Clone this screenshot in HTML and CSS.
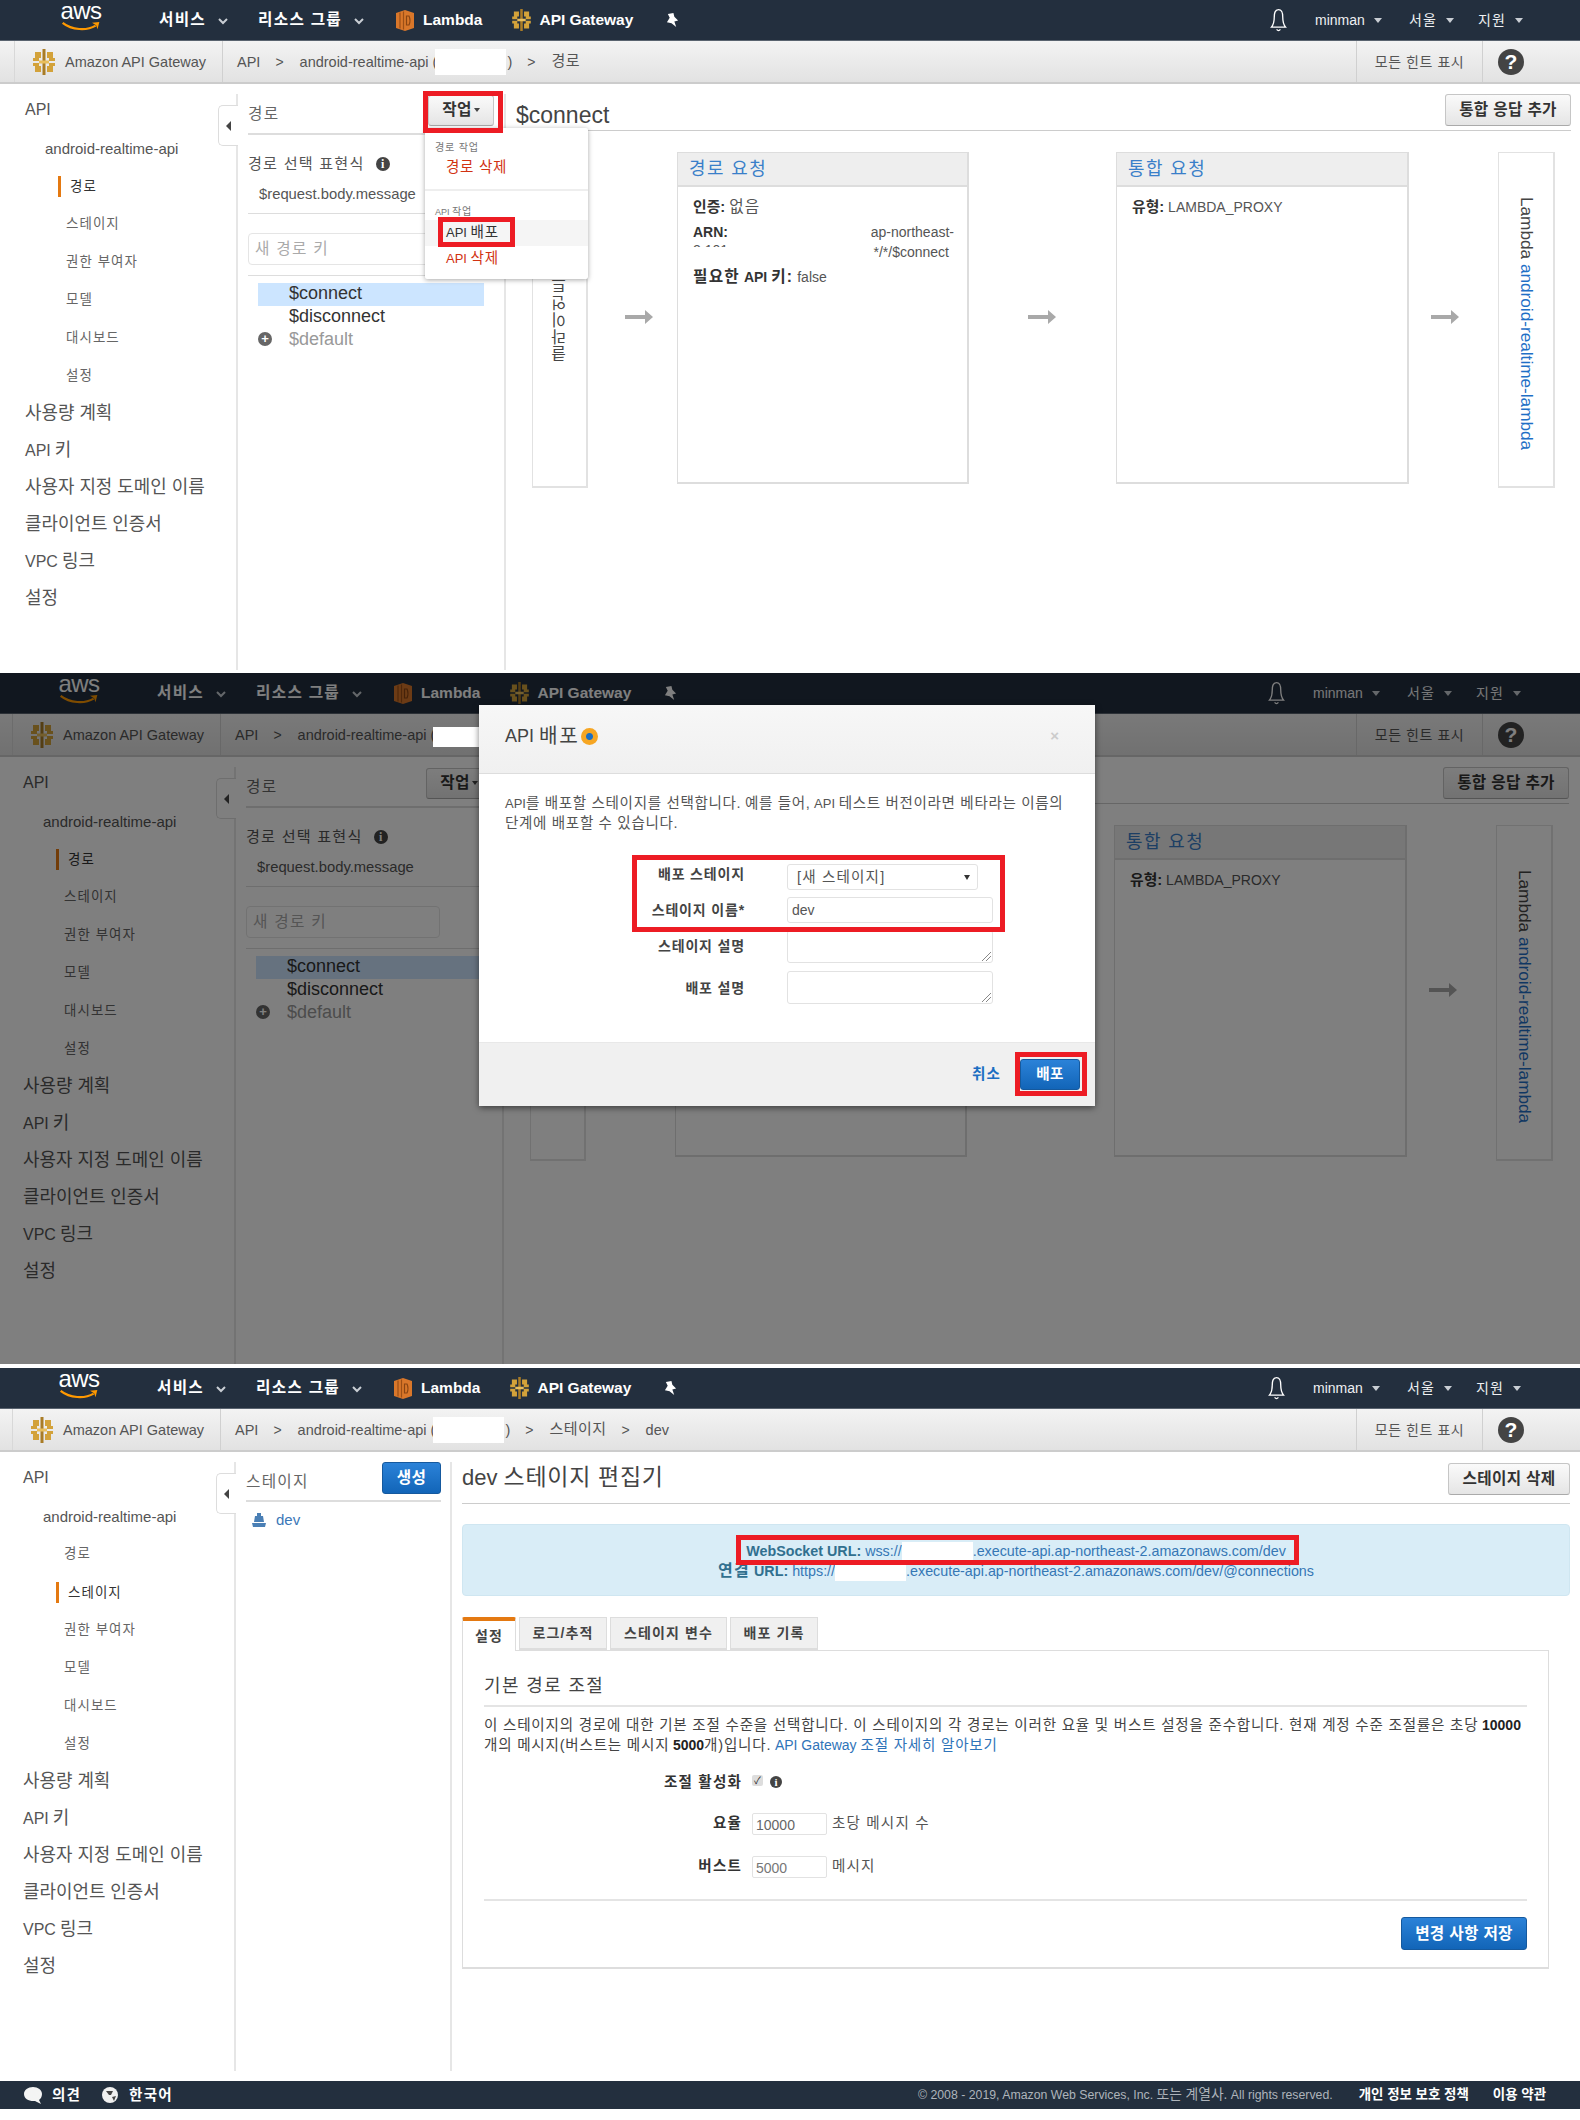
FILE: index.html
```html
<!DOCTYPE html>
<html lang="ko">
<head>
    <meta charset="utf-8">
    <title>API Gateway</title>
    <link rel="stylesheet" href="styles.css">
</head>
<body>
    <!-- shared icons -->
    <svg class="svg-defs" aria-hidden="true">
        <symbol id="i-smile" viewBox="0 0 42 12">
            <path d="M1 2 C11 10 27 11 37 5" fill="none" stroke="#f90" stroke-width="2.4"/>
            <path d="M33 2 L41 1 L39 9 L37.500 4.500 Z" fill="#f90"/>
        </symbol>
        <symbol id="i-gateway" viewBox="0 0 22 26">
            <rect x="9.500" y="0" width="3" height="26" fill="#a97c26"/>
            <path d="M8 3 H2 V9 H0 V12 H6 V9 H8 Z M14 3 H20 V9 H22 V12 H16 V9 H14 Z M0 14 H6 V17 H8 V23 H2 V17 H0 Z M22 14 H16 V17 H14 V23 H20 V17 H22 Z" fill="#d3a23a"/>
            <rect x="6" y="11.500" width="10" height="3" fill="#e8be5c"/>
        </symbol>
        <symbol id="i-lambda" viewBox="0 0 18 21">
            <polygon points="9,0 18,3 18,18 9,21 0,18 0,3" fill="#d9772a"/>
            <path d="M4 2.500 V18.500 M7.500 1.500 V19.500" stroke="#9c4f16" stroke-width="1.200"/>
            <path d="M10.500 6 H13 Q15 10.500 13 15 H10.500 Z" fill="none" stroke="#8a4512" stroke-width="1.200"/>
        </symbol>
        <symbol id="i-pin" viewBox="0 0 14 16">
            <path d="M2 1 L8 0 L9 4 L13 8 L9 9 L11 15 L6 11 L1 10 L4 5 Z" fill="#fff"/>
        </symbol>
        <symbol id="i-bell" viewBox="0 0 18 26">
            <path d="M9 2 C5 2 4.500 6 4.500 10 C4.500 15 3.500 18 1.500 20.500 H16.500 C14.500 18 13.500 15 13.500 10 C13.500 6 13 2 9 2 Z M7 23 Q9 25.500 11 23" fill="none" stroke="#fff" stroke-width="1.400"/>
        </symbol>
        <symbol id="i-arrow" viewBox="0 0 28 14">
            <path d="M0 5 H20 V0 L28 7 L20 14 V9 H0 Z" fill="#a9a9a9"/>
        </symbol>
        <symbol id="i-chev" viewBox="0 0 10 7">
            <path d="M1 1 L5 5 L9 1" fill="none" stroke="#c9ced4" stroke-width="2"/>
        </symbol>
        <symbol id="i-stage" viewBox="0 0 16 16">
            <path d="M6 1 H10 V4 H12 L13 10 H3 L4 4 H6 Z M1 11 H15 L14 15 H2 Z" fill="#4a7fb5"/>
        </symbol>
    </svg>

    <!-- 1: route actions -->
    <section class="shot shot-one">
        <header class="nav">
            <div class="aws"><span class="aws-word">aws</span><svg class="aws-smile"><use href="#i-smile"/></svg></div>
            <span class="nav-link nav-services"><span class="k">서비스</span></span><svg class="chev"><use href="#i-chev"/></svg>
            <span class="nav-link nav-groups"><span class="k">리소스 그룹</span></span><svg class="chev"><use href="#i-chev"/></svg>
            <svg class="svc-lambda"><use href="#i-lambda"/></svg><span class="nav-link nav-strong">Lambda</span>
            <svg class="svc-gateway"><use href="#i-gateway"/></svg><span class="nav-link nav-strong">API Gateway</span>
            <svg class="nav-pin"><use href="#i-pin"/></svg>
            <svg class="nav-bell"><use href="#i-bell"/></svg>
            <span class="nav-small nav-user">minman<i class="tri"></i></span>
            <span class="nav-small nav-region"><span class="k">서울</span><i class="tri"></i></span>
            <span class="nav-small nav-help"><span class="k">지원</span><i class="tri"></i></span>
        </header>
        <div class="subnav">
            <div class="sub-brand"><svg class="brand-icon"><use href="#i-gateway"/></svg>Amazon API Gateway</div>
            <div class="crumbs">
                <span>API</span><span class="sep">&gt;</span><span>android-realtime-api (</span><span class="hide-id"></span><span>)</span><span class="sep">&gt;</span><span class="k">경로</span>
            </div>
            <div class="hints"><span class="k">모든 힌트 표시</span></div>
            <div class="help"><span class="help-dot">?</span></div>
        </div>
        <div class="layout">
            <aside class="sidebar">
                <div class="toggle"><i class="toggle-tri"></i></div>
                <a class="side-top side-first">API</a>
                <a class="side-api">android-realtime-api</a>
                <a class="side-sub"><span class="side-on k">경로</span></a>
                <a class="side-sub"><span class="k">스테이지</span></a>
                <a class="side-sub"><span class="k">권한 부여자</span></a>
                <a class="side-sub"><span class="k">모델</span></a>
                <a class="side-sub"><span class="k">대시보드</span></a>
                <a class="side-sub"><span class="k">설정</span></a>
                <a class="side-top"><span class="k">사용량 계획</span></a>
                <a class="side-top">API <span class="k">키</span></a>
                <a class="side-top"><span class="k">사용자 지정 도메인 이름</span></a>
                <a class="side-top"><span class="k">클라이언트 인증서</span></a>
                <a class="side-top">VPC <span class="k">링크</span></a>
                <a class="side-top"><span class="k">설정</span></a>
            </aside>
            <div class="routes">
                <div class="routes-head">
                    <span class="k">경로</span>
                    <button class="btn btn-actions"><span class="k">작업</span><i class="tri tri-dark"></i></button>
                </div>
                <div class="expr-label"><span class="k">경로 선택 표현식</span><span class="info">i</span></div>
                <div class="expr-value">$request.body.message</div>
                <div class="route-input"><span class="k">새 경로 키</span></div>
                <ul class="route-list">
                    <li class="route-on">$connect</li>
                    <li>$disconnect</li>
                    <li class="route-add"><span class="plus">+</span>$default</li>
                </ul>
            </div>
            <main class="detail">
                <div class="detail-head">
                    <h1>$connect</h1>
                    <button class="btn btn-addresp"><span class="k">통합 응답 추가</span></button>
                </div>
                <div class="flow">
                    <div class="flow-side"><span class="vtext vtext-up"><span class="k">클라이언트</span></span></div>
                    <svg class="flow-arrow arrow-a"><use href="#i-arrow"/></svg>
                    <div class="flow-box">
                        <div class="flow-title"><span class="k">경로 요청</span></div>
                        <div class="flow-body">
                            <p><b class="k">인증:</b> <span class="k">없음</span></p>
                            <div class="arn"><b>ARN:</b><span class="arn-end">ap-northeast-</span></div>
                            <div class="arn arn-two"><span class="arn-cut">2:101</span><span class="arn-end">*/*/$connect</span></div>
                            <p class="flow-last"><b><span class="k">필요한</span> API <span class="k">키:</span></b> false</p>
                        </div>
                    </div>
                    <svg class="flow-arrow arrow-b"><use href="#i-arrow"/></svg>
                    <div class="flow-box">
                        <div class="flow-title"><span class="k">통합 요청</span></div>
                        <div class="flow-body"><p><b class="k">유형:</b> LAMBDA_PROXY</p></div>
                    </div>
                    <svg class="flow-arrow arrow-c"><use href="#i-arrow"/></svg>
                    <div class="flow-side"><span class="vtext">Lambda <a>android-realtime-lambda</a></span></div>
                </div>
            </main>
        </div>
        <div class="menu">
            <div class="menu-cap"><span class="k">경로 작업</span></div>
            <div class="menu-item menu-red"><span class="k">경로 삭제</span></div>
            <div class="menu-line"></div>
            <div class="menu-cap menu-cap-two">API <span class="k">작업</span></div>
            <div class="menu-item menu-hover">API <span class="k">배포</span></div>
            <div class="menu-item menu-red">API <span class="k">삭제</span></div>
        </div>
        <div class="mark mark-actions"></div>
        <div class="mark mark-deploy"></div>
    </section>

    <!-- 2: deploy dialog -->
    <section class="shot shot-two">
        <header class="nav">
            <div class="aws"><span class="aws-word">aws</span><svg class="aws-smile"><use href="#i-smile"/></svg></div>
            <span class="nav-link nav-services"><span class="k">서비스</span></span><svg class="chev"><use href="#i-chev"/></svg>
            <span class="nav-link nav-groups"><span class="k">리소스 그룹</span></span><svg class="chev"><use href="#i-chev"/></svg>
            <svg class="svc-lambda"><use href="#i-lambda"/></svg><span class="nav-link nav-strong">Lambda</span>
            <svg class="svc-gateway"><use href="#i-gateway"/></svg><span class="nav-link nav-strong">API Gateway</span>
            <svg class="nav-pin"><use href="#i-pin"/></svg>
            <svg class="nav-bell"><use href="#i-bell"/></svg>
            <span class="nav-small nav-user">minman<i class="tri"></i></span>
            <span class="nav-small nav-region"><span class="k">서울</span><i class="tri"></i></span>
            <span class="nav-small nav-help"><span class="k">지원</span><i class="tri"></i></span>
        </header>
        <div class="subnav">
            <div class="sub-brand"><svg class="brand-icon"><use href="#i-gateway"/></svg>Amazon API Gateway</div>
            <div class="crumbs">
                <span>API</span><span class="sep">&gt;</span><span>android-realtime-api (</span>
            </div>
            <div class="hints"><span class="k">모든 힌트 표시</span></div>
            <div class="help"><span class="help-dot">?</span></div>
        </div>
        <div class="layout">
            <aside class="sidebar">
                <div class="toggle"><i class="toggle-tri"></i></div>
                <a class="side-top side-first">API</a>
                <a class="side-api">android-realtime-api</a>
                <a class="side-sub"><span class="side-on k">경로</span></a>
                <a class="side-sub"><span class="k">스테이지</span></a>
                <a class="side-sub"><span class="k">권한 부여자</span></a>
                <a class="side-sub"><span class="k">모델</span></a>
                <a class="side-sub"><span class="k">대시보드</span></a>
                <a class="side-sub"><span class="k">설정</span></a>
                <a class="side-top"><span class="k">사용량 계획</span></a>
                <a class="side-top">API <span class="k">키</span></a>
                <a class="side-top"><span class="k">사용자 지정 도메인 이름</span></a>
                <a class="side-top"><span class="k">클라이언트 인증서</span></a>
                <a class="side-top">VPC <span class="k">링크</span></a>
                <a class="side-top"><span class="k">설정</span></a>
            </aside>
            <div class="routes">
                <div class="routes-head">
                    <span class="k">경로</span>
                    <button class="btn btn-actions"><span class="k">작업</span><i class="tri tri-dark"></i></button>
                </div>
                <div class="expr-label"><span class="k">경로 선택 표현식</span><span class="info">i</span></div>
                <div class="expr-value">$request.body.message</div>
                <div class="route-input"><span class="k">새 경로 키</span></div>
                <ul class="route-list">
                    <li class="route-on">$connect</li>
                    <li>$disconnect</li>
                    <li class="route-add"><span class="plus">+</span>$default</li>
                </ul>
            </div>
            <main class="detail">
                <div class="detail-head detail-head-end">
                    <button class="btn btn-addresp"><span class="k">통합 응답 추가</span></button>
                </div>
                <div class="flow">
                    <div class="flow-side"></div>
                    <svg class="flow-arrow arrow-a"><use href="#i-arrow"/></svg>
                    <div class="flow-box">
                        <div class="flow-title"></div>
                    </div>
                    <svg class="flow-arrow arrow-b"><use href="#i-arrow"/></svg>
                    <div class="flow-box">
                        <div class="flow-title"><span class="k">통합 요청</span></div>
                        <div class="flow-body"><p><b class="k">유형:</b> LAMBDA_PROXY</p></div>
                    </div>
                    <svg class="flow-arrow arrow-c"><use href="#i-arrow"/></svg>
                    <div class="flow-side"><span class="vtext">Lambda <a>android-realtime-lambda</a></span></div>
                </div>
            </main>
        </div>
        <div class="dim"></div>
        <div class="hide-over"></div>
        <div class="modal">
            <div class="modal-head">
                <h2>API <span class="k">배포</span><i class="modal-dot"></i></h2>
                <span class="modal-x">×</span>
            </div>
            <div class="modal-body">
                <p>API<span class="k">를 배포할 스테이지를 선택합니다.</span> <span class="k">예를 들어,</span> API <span class="k">테스트 버전이라면 베타라는 이름의</span><br><span class="k">단계에 배포할 수 있습니다.</span></p>
                <div class="modal-form">
                    <label class="k">배포 스테이지</label>
                    <div class="field field-select"><span class="k">[새 스테이지]</span><i class="select-tri"></i></div>
                    <label class="k">스테이지 이름*</label>
                    <div class="field field-name">dev</div>
                    <label class="k">스테이지 설명</label>
                    <div class="field field-area"><i class="grip"></i></div>
                    <label class="k">배포 설명</label>
                    <div class="field field-area"><i class="grip"></i></div>
                </div>
            </div>
            <div class="modal-foot">
                <a class="modal-cancel"><span class="k">취소</span></a>
                <button class="btn btn-blue btn-deploy"><span class="k">배포</span></button>
            </div>
        </div>
        <div class="mark mark-form"></div>
        <div class="mark mark-submit"></div>
    </section>

    <!-- 3: stage editor -->
    <section class="shot shot-three">
        <header class="nav">
            <div class="aws"><span class="aws-word">aws</span><svg class="aws-smile"><use href="#i-smile"/></svg></div>
            <span class="nav-link nav-services"><span class="k">서비스</span></span><svg class="chev"><use href="#i-chev"/></svg>
            <span class="nav-link nav-groups"><span class="k">리소스 그룹</span></span><svg class="chev"><use href="#i-chev"/></svg>
            <svg class="svc-lambda"><use href="#i-lambda"/></svg><span class="nav-link nav-strong">Lambda</span>
            <svg class="svc-gateway"><use href="#i-gateway"/></svg><span class="nav-link nav-strong">API Gateway</span>
            <svg class="nav-pin"><use href="#i-pin"/></svg>
            <svg class="nav-bell"><use href="#i-bell"/></svg>
            <span class="nav-small nav-user">minman<i class="tri"></i></span>
            <span class="nav-small nav-region"><span class="k">서울</span><i class="tri"></i></span>
            <span class="nav-small nav-help"><span class="k">지원</span><i class="tri"></i></span>
        </header>
        <div class="subnav">
            <div class="sub-brand"><svg class="brand-icon"><use href="#i-gateway"/></svg>Amazon API Gateway</div>
            <div class="crumbs">
                <span>API</span><span class="sep">&gt;</span><span>android-realtime-api (</span><span class="hide-id"></span><span>)</span><span class="sep">&gt;</span><span class="k">스테이지</span><span class="sep">&gt;</span><span>dev</span>
            </div>
            <div class="hints"><span class="k">모든 힌트 표시</span></div>
            <div class="help"><span class="help-dot">?</span></div>
        </div>
        <div class="layout">
            <aside class="sidebar">
                <div class="toggle"><i class="toggle-tri"></i></div>
                <a class="side-top side-first">API</a>
                <a class="side-api">android-realtime-api</a>
                <a class="side-sub"><span class="k">경로</span></a>
                <a class="side-sub"><span class="side-on k">스테이지</span></a>
                <a class="side-sub"><span class="k">권한 부여자</span></a>
                <a class="side-sub"><span class="k">모델</span></a>
                <a class="side-sub"><span class="k">대시보드</span></a>
                <a class="side-sub"><span class="k">설정</span></a>
                <a class="side-top"><span class="k">사용량 계획</span></a>
                <a class="side-top">API <span class="k">키</span></a>
                <a class="side-top"><span class="k">사용자 지정 도메인 이름</span></a>
                <a class="side-top"><span class="k">클라이언트 인증서</span></a>
                <a class="side-top">VPC <span class="k">링크</span></a>
                <a class="side-top"><span class="k">설정</span></a>
            </aside>
            <div class="stages">
                <div class="stages-head">
                    <span class="k">스테이지</span>
                    <button class="btn btn-blue btn-create"><span class="k">생성</span></button>
                </div>
                <div class="stage-row"><svg class="stage-icon"><use href="#i-stage"/></svg>dev</div>
            </div>
            <main class="editor">
                <div class="editor-head">
                    <h1>dev <span class="k">스테이지 편집기</span></h1>
                    <button class="btn btn-delstage"><span class="k">스테이지 삭제</span></button>
                </div>
                <div class="urls">
                    <div><b>WebSocket URL:</b> <a>wss://<span class="hide-url"></span>.execute-api.ap-northeast-2.amazonaws.com/dev</a></div>
                    <div><b><span class="k">연결</span> URL:</b> <a>https://<span class="hide-url"></span>.execute-api.ap-northeast-2.amazonaws.com/dev/@connections</a></div>
                </div>
                <div class="tabs">
                    <span class="tab tab-on k">설정</span>
                    <span class="tab"><span class="k">로그/추적</span></span>
                    <span class="tab"><span class="k">스테이지 변수</span></span>
                    <span class="tab"><span class="k">배포 기록</span></span>
                </div>
                <div class="panel">
                    <h3><span class="k">기본 경로 조절</span></h3>
                    <p class="panel-text"><span class="k">이 스테이지의 경로에 대한 기본 조절 수준을 선택합니다. 이 스테이지의 각 경로는 이러한 요율 및 버스트 설정을 준수합니다. 현재 계정 수준 조절률은 초당</span> <b>10000</b><br><span class="k">개의 메시지(버스트는 메시지</span> <b>5000</b><span class="k">개)입니다.</span> <a>API Gateway <span class="k">조절 자세히 알아보기</span></a></p>
                    <div class="limits">
                        <label class="k">조절 활성화</label>
                        <div class="limit-val"><i class="check">✓</i><span class="info info-tight">i</span></div>
                        <label class="k">요율</label>
                        <div class="limit-val"><span class="num-input">10000</span><span class="k">초당 메시지 수</span></div>
                        <label class="k">버스트</label>
                        <div class="limit-val"><span class="num-input num-burst">5000</span><span class="k">메시지</span></div>
                    </div>
                    <div class="panel-foot">
                        <button class="btn btn-blue btn-save"><span class="k">변경 사항 저장</span></button>
                    </div>
                </div>
            </main>
        </div>
        <footer class="footer">
            <svg class="foot-bubble" viewBox="0 0 18 18"><path d="M9 1 C14 1 18 4 18 8 C18 11 16.500 13 15 14 L17 18 L11 15 C5 15.500 0 13 0 8 C0 4 4 1 9 1 Z" fill="#f4f4f4"/></svg>
            <span class="foot-strong foot-opinion"><span class="k">의견</span></span>
            <svg class="foot-globe" viewBox="0 0 16 16"><circle cx="8" cy="8" r="8" fill="#f0f0f0"/><path d="M4 4 H11 L9 8 L7 8 Z M10 10 L14 9 L12 14 Z" fill="#444"/></svg>
            <span class="foot-strong"><span class="k">한국어</span></span>
            <span class="foot-copy">© 2008 - 2019, Amazon Web Services, Inc. <span class="k">또는 계열사.</span> All rights reserved.</span>
            <span class="foot-link"><span class="k">개인 정보 보호 정책</span></span>
            <span class="foot-link foot-terms"><span class="k">이용 약관</span></span>
        </footer>
        <div class="mark mark-url"></div>
    </section>
</body>
</html>
```

FILE: styles.css
```css
* {
    box-sizing: border-box;
}

html, body {
    margin: 0;
    padding: 0;
    width: 1580px;
    height: 2120px;
    overflow: hidden;
    background: #fff;
}

body {
    font-family: "Liberation Sans", "Noto Sans CJK KR", sans-serif;
    font-size: 14px;
    color: #444;
}

.svg-defs {
    position: absolute;
    width: 0;
    height: 0;
}

/* hangul runs come out wider than arial in the screenshot */
.k {
    font-size: 1.12em;
    letter-spacing: .08em;
    line-height: 1;
}

b.k, label.k {
    font-weight: 700;
}

b.k {
    font-size: 1.06em;
    letter-spacing: 0;
}

/* the three shots stacked */
.shot {
    position: relative;
    overflow: hidden;
}

.shot-one {
    height: 673px;
}

.shot-two {
    height: 691px;
    width: 1582px;
    margin-left: -2px;
}

.shot-three {
    height: 742px;
    width: 1582px;
    margin-left: -2px;
    margin-top: 4px;
}

/* top bar */
.nav {
    height: 41px;
    background: #232f3e;
    border-bottom: 1px solid #59636f;
    display: flex;
    align-items: center;
    color: #fff;
    padding: 0 40px 0 60px;
}

.shot-two .nav, .shot-three .nav {
    padding-right: 42px;
}

.aws {
    width: 42px;
    height: 34px;
    display: flex;
    flex-direction: column;
    align-items: center;
    margin-top: -2px;
}

.aws-word {
    font-size: 24px;
    line-height: 20px;
    letter-spacing: -.5px;
    margin-top: -1px;
}

.aws-smile {
    width: 42px;
    height: 11px;
    flex-shrink: 0;
}

.nav-link {
    font-size: 14px;
    font-weight: 700;
}

.nav-services {
    margin-left: 57px;
}

.chev {
    width: 10px;
    height: 7px;
    margin-left: 12px;
    margin-top: 3px;
}

.nav-groups {
    margin-left: 30px;
}

.nav-strong {
    font-size: 15.500px;
}

.svc-lambda {
    width: 18px;
    height: 21px;
    margin-left: 32px;
    margin-right: 9px;
}

.svc-gateway {
    width: 19px;
    height: 22px;
    margin-left: 30px;
    margin-right: 8px;
}

.nav-pin {
    width: 13px;
    height: 15px;
    margin-left: 33px;
}

.nav-bell {
    width: 17px;
    height: 26px;
    margin-left: auto;
    margin-right: 28px;
}

.nav-small {
    font-size: 14px;
    display: flex;
    align-items: center;
    color: #eef0f2;
}

.nav-small .k {
    font-size: 14px;
}

.nav-user {
    width: 94px;
}

.nav-region {
    width: 69px;
}

.nav-help {
    width: 62px;
}

.tri {
    display: inline-block;
    width: 0;
    height: 0;
    border-left: 4px solid transparent;
    border-right: 4px solid transparent;
    border-top: 5px solid #c9ced4;
    margin-left: 9px;
}

.tri-dark {
    border-left-width: 3px;
    border-right-width: 3px;
    border-top: 4px solid #444;
    margin-left: 2px;
}

/* grey bar under it */
.subnav {
    height: 43px;
    display: flex;
    align-items: center;
    background: linear-gradient(#f3f3f3, #e2e2e2);
    border-bottom: 2px solid #ccc;
    font-size: 14.500px;
    color: #555;
}

.sub-brand {
    margin-left: 14px;
    width: 209px;
    height: 100%;
    padding-left: 18px;
    border-left: 1px solid #d8d8d8;
    border-right: 1px solid #d0d0d0;
    display: flex;
    align-items: center;
}

.brand-icon {
    width: 22px;
    height: 26px;
    margin-right: 10px;
}

.crumbs {
    display: flex;
    align-items: center;
    padding-left: 14px;
}

.crumbs .k {
    font-size: 15px;
    letter-spacing: .03em;
    margin-top: -2px;
}

.sep {
    margin: 0 16px 0 15px;
    font-size: 14px;
}

.hide-id {
    display: block;
    width: 71px;
    height: 26px;
    margin-left: -2px;
    margin-right: 1px;
    background: #fff;
}

.hide-over {
    position: absolute;
    left: 435px;
    top: 54px;
    width: 50px;
    height: 20px;
    background: #fff;
    z-index: 3;
}

.hints {
    margin-left: auto;
    width: 127px;
    height: 100%;
    border-left: 1px solid #d0d0d0;
    border-right: 1px solid #d0d0d0;
    display: flex;
    align-items: center;
    justify-content: center;
    font-size: 13px;
}

.hints .k {
    font-size: 14px;
    letter-spacing: .04em;
}

.help {
    width: 97px;
    padding-left: 15px;
}

.help-dot {
    display: block;
    width: 26px;
    height: 26px;
    border-radius: 50%;
    background: #444;
    color: #fff;
    font-size: 21px;
    font-weight: 700;
    line-height: 26px;
    text-align: center;
}

/* three columns */
.layout {
    display: flex;
    height: 589px;
}

.shot-two .layout {
    height: 607px;
}

.shot-three .layout {
    height: 619px;
}

.sidebar {
    position: relative;
    width: 238px;
    margin-top: 10px;
    margin-bottom: 3px;
    border-right: 2px solid #e6e6e6;
    display: flex;
    flex-direction: column;
}

.shot-two .sidebar, .shot-three .sidebar {
    margin-bottom: 0;
}

.toggle {
    position: absolute;
    left: 218px;
    top: 11px;
    width: 20px;
    height: 41px;
    background: #fff;
    border: 1px solid #ddd;
    border-right: none;
    border-radius: 5px 0 0 5px;
    display: flex;
    align-items: center;
    padding-left: 7px;
}

.toggle-tri {
    width: 0;
    height: 0;
    border-top: 5px solid transparent;
    border-bottom: 5px solid transparent;
    border-right: 5px solid #444;
}

.side-top {
    display: flex;
    align-items: center;
    height: 37px;
    padding-left: 25px;
    font-size: 16px;
    color: #555;
    gap: 4px;
    flex-shrink: 0;
}

.side-top .k {
    letter-spacing: 0;
}

.side-first {
    height: 32px;
    margin-bottom: 3px;
}

.side-api {
    display: flex;
    align-items: center;
    height: 38px;
    padding-left: 45px;
    font-size: 15px;
    color: #555;
    flex-shrink: 0;
}

.side-sub {
    display: flex;
    align-items: center;
    height: 38px;
    padding-left: 66px;
    font-size: 12px;
    color: #666;
    flex-shrink: 0;
}

.side-on {
    margin-left: -8px;
    border-left: 3px solid #e47911;
    padding-left: 9px;
    height: 21px;
    line-height: 21px;
    color: #333;
}

/* route column */
.routes {
    width: 268px;
    margin-top: 10px;
    margin-bottom: 3px;
    border-right: 2px solid #e6e6e6;
    padding-left: 10px;
}

.shot-two .routes {
    margin-bottom: 0;
}

.routes-head {
    width: 246px;
    height: 41px;
    border-bottom: 2px solid #ddd;
    display: flex;
    align-items: center;
    justify-content: space-between;
    font-size: 14px;
    color: #666;
    padding-top: 1px;
}

.btn {
    font: inherit;
    border: 1px solid #c6c6c6;
    border-bottom-color: #aaa;
    border-radius: 3px;
    background: linear-gradient(#fafafa, #e5e5e5);
    color: #333;
    font-weight: 700;
    font-size: 14px;
    padding: 0;
    display: flex;
    align-items: center;
    justify-content: center;
}

.btn .k {
    letter-spacing: .02em;
}

.btn-actions {
    width: 66px;
    height: 31px;
    margin-top: -8px;
    font-size: 14px;
}

.expr-label {
    margin-top: 16px;
    display: flex;
    align-items: center;
    height: 26px;
    font-size: 13.500px;
    color: #555;
}

.info {
    display: inline-block;
    width: 14px;
    height: 14px;
    border-radius: 50%;
    background: #444;
    color: #fff;
    font-family: "Liberation Serif", serif;
    font-size: 12px;
    font-weight: 700;
    line-height: 14px;
    text-align: center;
    margin-left: 11px;
}

.expr-value {
    margin-top: 5px;
    width: 246px;
    height: 32px;
    padding-left: 11px;
    font-size: 14.800px;
    line-height: 24px;
    border-bottom: 1px solid #ddd;
    color: #555;
}

.route-input {
    margin-top: 19px;
    width: 194px;
    height: 32px;
    padding-left: 6px;
    border: 1px solid #e5e5e5;
    border-radius: 4px;
    font-size: 14px;
    color: #aaa;
    display: flex;
    align-items: center;
}

.route-list {
    list-style: none;
    margin: 10px 0 0;
    padding: 7px 0 0 10px;
    width: 246px;
    border-top: 1px solid #ddd;
    font-size: 18px;
    line-height: 20px;
    color: #333;
}

.route-list li {
    padding: 0 0 3px 31px;
    width: 226px;
}

.route-on {
    background: #cce5ff;
}

.route-list .route-add {
    color: #999;
    padding-left: 0;
    display: flex;
    align-items: center;
}

.plus {
    width: 14px;
    height: 14px;
    border-radius: 50%;
    background: #666;
    color: #fff;
    font-size: 13px;
    font-weight: 700;
    line-height: 13px;
    text-align: center;
    margin-right: 17px;
}

/* route detail */
.detail {
    width: 1074px;
    padding: 10px 0 0 9px;
}

.detail-head {
    height: 37px;
    width: 1056px;
    border-bottom: 1px solid #ccc;
    display: flex;
    justify-content: space-between;
    align-items: flex-start;
}

.detail-head-end {
    justify-content: flex-end;
}

.detail-head h1 {
    margin: 7px 0 0 1px;
    font-size: 23px;
    font-weight: 400;
    line-height: 28px;
    color: #444;
}

.btn-addresp {
    width: 126px;
    height: 32px;
}

.flow {
    margin-top: 21px;
    margin-left: 17px;
    display: grid;
    grid-template-columns: 56px 89px 292px 147px 293px 89px 57px;
    align-items: start;
}

.flow-side {
    height: 336px;
    border: 2px solid #e2e2e2;
    border-width: 1px 2px 2px 1px;
    display: flex;
    justify-content: center;
    padding-top: 44px;
}

.vtext {
    writing-mode: vertical-rl;
    font-size: 17.200px;
    color: #444;
    line-height: 1;
    white-space: nowrap;
    align-self: flex-start;
}

.vtext a {
    color: #1f6fc6;
}

.vtext-up {
    transform: rotate(180deg);
    margin-top: 80px;
    font-size: 14px;
}

.flow-arrow {
    width: 28px;
    height: 14px;
    margin-top: 158px;
}

.arrow-a {
    margin-left: 37px;
}

.arrow-b {
    margin-left: 59px;
}

.arrow-c {
    margin-left: 22px;
}

.flow-box {
    height: 332px;
    border: 1px solid #ddd;
    border-right-width: 2px;
    border-bottom-width: 2px;
}

.flow-title {
    height: 34px;
    background: #eee;
    border-bottom: 2px solid #ddd;
    padding-left: 11px;
    font-size: 16px;
    line-height: 33px;
    color: #3a7fc9;
}

.flow-body {
    padding: 10px 13px 10px 15px;
    font-size: 14px;
    color: #555;
}

.flow-body p {
    margin: 0;
    line-height: 20px;
}

.flow-body b {
    color: #333;
}

.arn {
    display: flex;
    justify-content: space-between;
    margin-top: 5px;
    line-height: 20px;
}

.arn-two {
    margin-top: 0;
    padding-right: 5px;
}

.arn-cut {
    height: 5px;
    overflow: hidden;
    line-height: 17px;
}

.flow-body .flow-last {
    margin-top: 5px;
}

/* actions dropdown */
.menu {
    position: absolute;
    left: 425px;
    top: 128px;
    width: 163px;
    height: 151px;
    background: #fff;
    border-radius: 2px;
    box-shadow: 0 1px 5px rgba(0, 0, 0, .35);
    padding-top: 14px;
    color: #777;
}

.menu-cap {
    padding-left: 10px;
    font-size: 9px;
    line-height: 13px;
}

.menu-cap-two {
    margin-top: 15px;
}

.menu-item {
    padding-left: 21px;
    height: 26px;
    line-height: 26px;
    font-size: 13px;
    color: #333;
}

.menu-item .k {
    letter-spacing: .05em;
}

.menu-red {
    color: #d13212;
}

.menu-hover {
    margin-top: 1px;
    background: #f5f5f5;
}

.menu-line {
    height: 2px;
    background: #eee;
    margin-top: 8px;
}

/* red rectangles drawn on the screenshot */
.mark {
    position: absolute;
    border: 5px solid #ed1c24;
    z-index: 6;
}

.mark-actions {
    left: 423px;
    top: 91px;
    width: 80px;
    height: 42px;
}

.mark-deploy {
    left: 438px;
    top: 217px;
    width: 77px;
    height: 30px;
}

/* dialog */
.dim {
    position: absolute;
    inset: 0;
    background: rgba(0, 0, 0, .5);
    z-index: 2;
}

.modal {
    position: absolute;
    left: 481px;
    top: 32px;
    width: 616px;
    height: 401px;
    background: #fff;
    border-radius: 3px;
    box-shadow: 0 2px 6px rgba(0, 0, 0, .5);
    z-index: 4;
    display: flex;
    flex-direction: column;
}

.modal-head {
    height: 69px;
    flex-shrink: 0;
    background: linear-gradient(#f7f7f7, #f0f0f0);
    border-bottom: 1px solid #ddd;
    padding: 16px 26px 0;
    display: flex;
    justify-content: space-between;
    align-items: flex-start;
}

.modal-head h2 {
    margin: 0;
    font-size: 18px;
    font-weight: 400;
    line-height: 30px;
    color: #444;
    display: flex;
    align-items: center;
    gap: 5px;
}

.modal-head h2 .k {
    margin-right: -3px;
}

.modal-dot {
    width: 17px;
    height: 17px;
    border-radius: 50%;
    background: radial-gradient(#1a6fc4 0 3px, #f6a623 4px);
}

.modal-x {
    color: #ccc;
    font-size: 15px;
    font-weight: 700;
    line-height: 30px;
    margin-right: 10px;
}

.modal-body {
    flex: 1;
    padding: 20px 26px 0;
}

.modal-body p {
    margin: 0;
    font-size: 13px;
    line-height: 20px;
    color: #555;
    white-space: nowrap;
}

.modal-body p .k {
    letter-spacing: .045em;
}

.modal-form {
    margin-top: 30px;
    display: grid;
    grid-template-columns: 240px 206px;
    column-gap: 42px;
    row-gap: 7px;
    align-items: center;
}

.modal-form label {
    text-align: right;
    font-size: 14px;
    letter-spacing: .06em;
    color: #444;
    font-weight: 700;
}

.modal-form label:nth-of-type(1) {
    margin-top: -6px;
}

.modal-form label:nth-of-type(3) {
    margin-top: -3px;
}

.field {
    height: 26px;
    border: 1px solid #e2e2e2;
    border-radius: 3px;
    background: #fff;
    font-size: 14px;
    color: #555;
    display: flex;
    align-items: center;
    padding-left: 4px;
}

.field-select {
    width: 191px;
    padding-left: 9px;
    justify-content: space-between;
    padding-right: 7px;
    font-size: 13px;
}

.select-tri {
    width: 0;
    height: 0;
    border-left: 3px solid transparent;
    border-right: 3px solid transparent;
    border-top: 5px solid #333;
}

.field-area {
    height: 33px;
    position: relative;
    margin-bottom: 1px;
}

.grip {
    position: absolute;
    right: 1px;
    bottom: 1px;
    width: 9px;
    height: 9px;
    background: linear-gradient(135deg, transparent 45%, #888 45% 52%, transparent 52% 70%, #888 70% 77%, transparent 77%);
}

.modal-foot {
    height: 64px;
    flex-shrink: 0;
    background: #f0f0f0;
    border-top: 1px solid #e8e8e8;
    display: flex;
    align-items: center;
    justify-content: flex-end;
    padding-right: 15px;
}

.modal-cancel {
    color: #1b6ec2;
    font-weight: 700;
    font-size: 13px;
    margin-right: 19px;
}

.btn-blue {
    background: linear-gradient(#2b82d8, #1265b8);
    border: 1px solid #15599e;
    color: #fff;
}

.btn-deploy {
    width: 60px;
    height: 31px;
    font-size: 13px;
}

.mark-form {
    left: 634px;
    top: 182px;
    width: 373px;
    height: 77px;
}

.mark-submit {
    left: 1017px;
    top: 379px;
    width: 72px;
    height: 44px;
}

/* stage list */
.stages {
    width: 216px;
    margin-top: 10px;
    border-right: 2px solid #e6e6e6;
    padding-left: 10px;
}

.stages-head {
    width: 195px;
    height: 40px;
    border-bottom: 2px solid #ddd;
    display: flex;
    justify-content: space-between;
    font-size: 14px;
    color: #666;
}

.stages-head > .k {
    margin-top: 12px;
}

.btn-create {
    width: 59px;
    height: 32px;
}

.stage-row {
    display: flex;
    align-items: center;
    padding-left: 5px;
    margin-top: 9px;
    font-size: 15px;
    color: #3b78b8;
}

.stage-icon {
    width: 16px;
    height: 16px;
    margin-right: 9px;
}

/* stage editor */
.editor {
    width: 1119px;
    padding: 10px 0 0 10px;
}

.editor-head {
    width: 1108px;
    height: 42px;
    border-bottom: 1px solid #ccc;
    display: flex;
    justify-content: space-between;
    align-items: flex-start;
}

.editor-head h1 {
    margin: 2px 0 0;
    font-size: 22px;
    font-weight: 400;
    line-height: 28px;
    color: #444;
}

.editor-head h1 .k {
    font-size: 23px;
    letter-spacing: .03em;
}

.btn-delstage {
    width: 122px;
    height: 32px;
    margin-top: 1px;
}

.urls {
    margin-top: 20px;
    width: 1108px;
    height: 72px;
    background: #d9edf7;
    border: 1px solid #cfe6f1;
    border-radius: 4px;
    padding-top: 16px;
    font-size: 14.300px;
    line-height: 20px;
    text-align: center;
    color: #31708f;
}

.urls a {
    color: #3577b5;
}

.hide-url {
    display: inline-block;
    width: 71px;
    height: 19px;
    background: #fff;
    vertical-align: -5px;
}

.tabs {
    margin-top: 21px;
    display: flex;
    gap: 3px;
    height: 34px;
    align-items: stretch;
    position: relative;
    z-index: 1;
}

.tab {
    display: flex;
    align-items: center;
    justify-content: center;
    height: 33px;
    background: #f0f0f0;
    border: 1px solid #ddd;
    border-bottom: 2px solid #ddd;
    font-size: 13px;
    font-weight: 700;
    color: #444;
}

.tab .k {
    font-size: 14px;
}

.tab:nth-child(2) {
    width: 88px;
}

.tab:nth-child(3) {
    width: 117px;
}

.tab:nth-child(4) {
    width: 88px;
}

.tab-on {
    width: 54px;
    height: 34px;
    background: #fff;
    border: 1px solid #ddd;
    border-top: 4px solid #e47911;
    border-bottom: none;
    border-radius: 2px 2px 0 0;
    font-size: 14px;
}

.panel {
    width: 1087px;
    height: 319px;
    margin-top: -1px;
    border: 1px solid #ddd;
    border-bottom-width: 2px;
    padding: 0 21px;
}

.panel h3 {
    margin: 0;
    height: 56px;
    padding-top: 22px;
    font-size: 16px;
    font-weight: 400;
    line-height: 28px;
    color: #444;
    border-bottom: 2px solid #e4e4e4;
}

.panel-text {
    margin: 9px 0 0;
    height: 40px;
    font-size: 13px;
    line-height: 20px;
    white-space: nowrap;
    color: #444;
}

.panel-text .k {
    letter-spacing: .054em;
}

.panel-text b {
    font-size: 14px;
    line-height: 1;
    color: #222;
}

.panel-text a {
    font-size: 14px;
    line-height: 1;
    color: #2f74b9;
}

.panel-text a .k {
    font-size: 14.560px;
}

.limits {
    margin-top: 3px;
    display: grid;
    grid-template-columns: 258px auto;
    column-gap: 10px;
    grid-auto-rows: 43px;
    align-items: center;
    font-size: 13px;
}

.limits label {
    text-align: right;
    font-weight: 700;
    color: #333;
}

.limits label:first-child, .limits label:first-child + .limit-val {
    margin-top: 3px;
}

.limit-val {
    display: flex;
    align-items: center;
    gap: 5px;
    color: #555;
}

.check {
    width: 11px;
    height: 11px;
    background: #ddd;
    border-radius: 2px;
    font-size: 10px;
    font-style: normal;
    line-height: 11px;
    text-align: center;
    color: #222;
    margin-top: -3px;
}

.info-tight {
    margin-left: 2px;
    width: 12px;
    height: 12px;
    line-height: 12px;
    font-size: 11px;
}

.num-input {
    width: 75px;
    height: 22px;
    border: 1px solid #e2e2e2;
    border-radius: 2px;
    padding-left: 3px;
    font-size: 14px;
    line-height: 22px;
    color: #666;
}

.num-burst {
    color: #777;
}

.panel-foot {
    margin-top: 11px;
    border-top: 2px solid #e4e4e4;
    padding-top: 16px;
    display: flex;
    justify-content: flex-end;
}

.btn-save {
    width: 126px;
    height: 33px;
}

/* footer */
.footer {
    height: 28px;
    margin-top: 10px;
    background: #232f3e;
    display: flex;
    align-items: center;
    padding-left: 26px;
    color: #fff;
    font-size: 13px;
}

.foot-bubble {
    width: 18px;
    height: 18px;
    margin-right: 10px;
}

.foot-globe {
    width: 16px;
    height: 16px;
    margin-left: 21px;
    margin-right: 11px;
}

.foot-strong {
    font-weight: 700;
}

.foot-copy {
    margin-left: auto;
    font-size: 12.300px;
    color: #aeb4bb;
}

.foot-copy .k {
    letter-spacing: 0;
}

.foot-link {
    margin-left: 26px;
    font-size: 12px;
    font-weight: 700;
}

.foot-link .k {
    letter-spacing: 0;
}

.foot-terms {
    margin-left: 24px;
    margin-right: 34px;
}

.mark-url {
    left: 738px;
    top: 167px;
    width: 563px;
    height: 30px;
}
```
